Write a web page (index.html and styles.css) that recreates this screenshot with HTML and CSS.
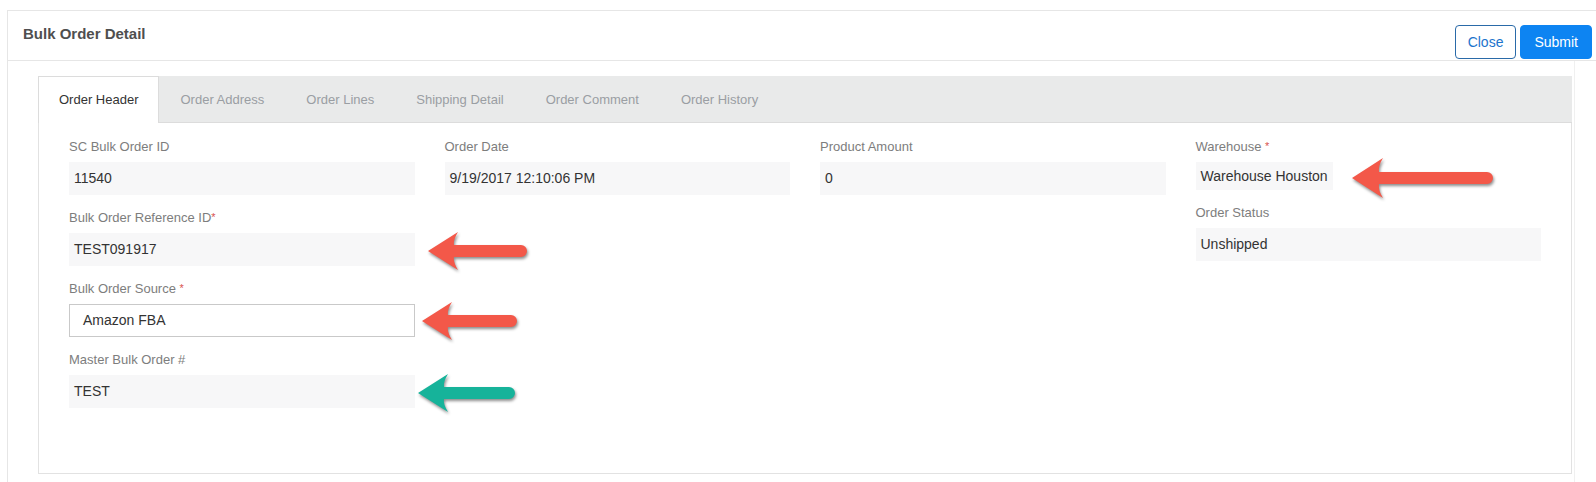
FILE: index.html
```
<!DOCTYPE html>
<html lang="en">
<head>
  <meta charset="UTF-8">
  <title>Bulk Order Detail</title>
  <link rel="stylesheet" href="styles.css">
</head>
<body>
  <div class="card">
    <div class="card-header">
      <h2 class="card-title">Bulk Order Detail</h2>
      <div class="header-actions">
        <button class="btn btn-outline">Close</button>
        <button class="btn btn-primary">Submit</button>
      </div>
    </div>

    <div class="card-body">
      <ul class="tabs">
        <li class="tab active">Order Header</li>
        <li class="tab">Order Address</li>
        <li class="tab">Order Lines</li>
        <li class="tab">Shipping Detail</li>
        <li class="tab">Order Comment</li>
        <li class="tab">Order History</li>
      </ul>

      <div class="tab-panel">
        <div class="field-grid">
          <div class="field-col">
            <div class="field">
              <label>SC Bulk Order ID</label>
              <div class="value">11540</div>
            </div>
            <div class="field">
              <label>Bulk Order Reference ID<span class="req">*</span></label>
              <div class="value-wrap">
                <div class="value">TEST091917</div>
                <svg class="arrow arrow-ref" width="106" height="42" viewBox="0 0 106 42">
                  <path d="M1 20 L31 1 Q26 9 27 14 L94 14 A6 6 0 0 1 94 26 L27 26 Q26 31 31 39 Z" fill="#f35849"/>
                </svg>
              </div>
            </div>
            <div class="field">
              <label>Bulk Order Source <span class="req">*</span></label>
              <div class="value-wrap">
                <div class="value value-select">Amazon FBA</div>
                <svg class="arrow arrow-source" width="102" height="42" viewBox="0 0 102 42">
                  <path d="M1 20 L31 1 Q26 9 27 14 L90 14 A6 6 0 0 1 90 26 L27 26 Q26 31 31 39 Z" fill="#f35849"/>
                </svg>
              </div>
            </div>
            <div class="field">
              <label>Master Bulk Order #</label>
              <div class="value-wrap">
                <div class="value">TEST</div>
                <svg class="arrow arrow-master" width="104" height="42" viewBox="0 0 104 42">
                  <path d="M1 20 L31 1 Q26 9 27 14 L92 14 A6 6 0 0 1 92 26 L27 26 Q26 31 31 39 Z" fill="#16b39a"/>
                </svg>
              </div>
            </div>
          </div>

          <div class="field-col">
            <div class="field">
              <label>Order Date</label>
              <div class="value">9/19/2017 12:10:06 PM</div>
            </div>
          </div>

          <div class="field-col">
            <div class="field">
              <label>Product Amount</label>
              <div class="value">0</div>
            </div>
          </div>

          <div class="field-col">
            <div class="field">
              <label>Warehouse <span class="req">*</span></label>
              <div class="value-wrap fit">
                <div class="value value-short">Warehouse Houston</div>
                <svg class="arrow arrow-warehouse" width="148" height="44" viewBox="0 0 148 44">
                  <path d="M1 21 L32 1 Q27 9 28 15 L136 15 A6 6 0 0 1 136 27 L28 27 Q27 33 32 41 Z" fill="#f35849"/>
                </svg>
              </div>
            </div>
            <div class="field">
              <label>Order Status</label>
              <div class="value">Unshipped</div>
            </div>
          </div>
        </div>
      </div>
    </div>
  </div>
</body>
</html>
```

FILE: styles.css
```
:root {
  --border: #e6e6e6;
  --tab-bg: #e9eaea;
  --field-bg: #f7f7f8;
  --label: #7d7d7d;
  --text: #333333;
  --blue: #0d84f2;
}

html, body {
  overflow: hidden;
}

body {
  margin: 0;
  font-family: "Liberation Sans", Arial, Helvetica, sans-serif;
  color: var(--text);
  background: #ffffff;
}

.card {
  margin: 10px 0 0 7px;
  border: 1px solid var(--border);
  border-right: none;
}

.card-header {
  display: flex;
  justify-content: space-between;
  align-items: flex-start;
  height: 49px;
  padding: 0 4px 0 15px;
  border-bottom: 1px solid var(--border);
}

.card-title {
  margin: 13px 0 0 0;
  font-size: 15px;
  line-height: 20px;
  font-weight: bold;
  color: #4f4f4f;
}

.header-actions {
  display: flex;
  gap: 4px;
  margin-top: 14px;
}

.btn {
  height: 34px;
  padding: 0 12px;
  font-family: inherit;
  font-size: 14px;
  border-radius: 4px;
  cursor: pointer;
}

.btn-outline {
  background: #ffffff;
  color: #1d74cc;
  border: 1px solid #2a6aa8;
}

.btn-primary {
  background: var(--blue);
  color: #ffffff;
  border: 1px solid var(--blue);
  padding: 0 13px;
}

.card-body {
  margin-right: 21px;
  padding: 15px 2px 30px 30px;
  border-right: 1px solid #f0f0f0;
}

/* Tabs */
.tabs {
  display: flex;
  margin: 0;
  padding: 0;
  list-style: none;
  background: var(--tab-bg);
  border-bottom: 1px solid #dcdcdc;
}

.tab {
  height: 45px;
  line-height: 46px;
  padding: 0 20px;
  font-size: 13px;
  color: #9a9ea3;
  border: 1px solid transparent;
  border-bottom: none;
  margin-bottom: -1px;
}

.tab.active {
  background: #ffffff;
  color: #333333;
  border-color: #dcdcdc;
  height: 46px;
}

.tab-panel {
  border: 1px solid #e2e2e2;
  border-top: none;
  padding: 15px 30px 51px 30px;
}

.field-grid {
  display: grid;
  grid-template-columns: repeat(4, 1fr);
  column-gap: 30px;
}

.field {
  margin-bottom: 14px;
}

.field label {
  display: block;
  font-size: 13px;
  line-height: 17px;
  color: var(--label);
  margin-bottom: 7px;
}

.req {
  color: #d9534f;
  font-size: 11px;
  vertical-align: top;
}

.value-wrap {
  position: relative;
}

.value-wrap.fit {
  display: inline-block;
}

.value {
  height: 33px;
  line-height: 33px;
  padding: 0 5px;
  font-size: 14px;
  color: var(--text);
  background: var(--field-bg);
}

.value-select {
  background: #ffffff;
  border: 1px solid #c9c9c9;
  height: 31px;
  line-height: 31px;
  padding: 0 13px;
}

.value-short {
  height: 28px;
  line-height: 28px;
}

/* annotation arrows */
.arrow {
  position: absolute;
  filter: drop-shadow(1px 2px 1.5px rgba(0, 0, 0, 0.45));
}

.arrow-ref {
  left: calc(100% + 12px);
  top: calc(50% - 19px);
}

.arrow-source {
  left: calc(100% + 6px);
  top: calc(50% - 20px);
}

.arrow-master {
  left: calc(100% + 2px);
  top: calc(50% - 19px);
}

.arrow-warehouse {
  left: calc(100% + 18px);
  top: calc(50% - 19px);
}
```
